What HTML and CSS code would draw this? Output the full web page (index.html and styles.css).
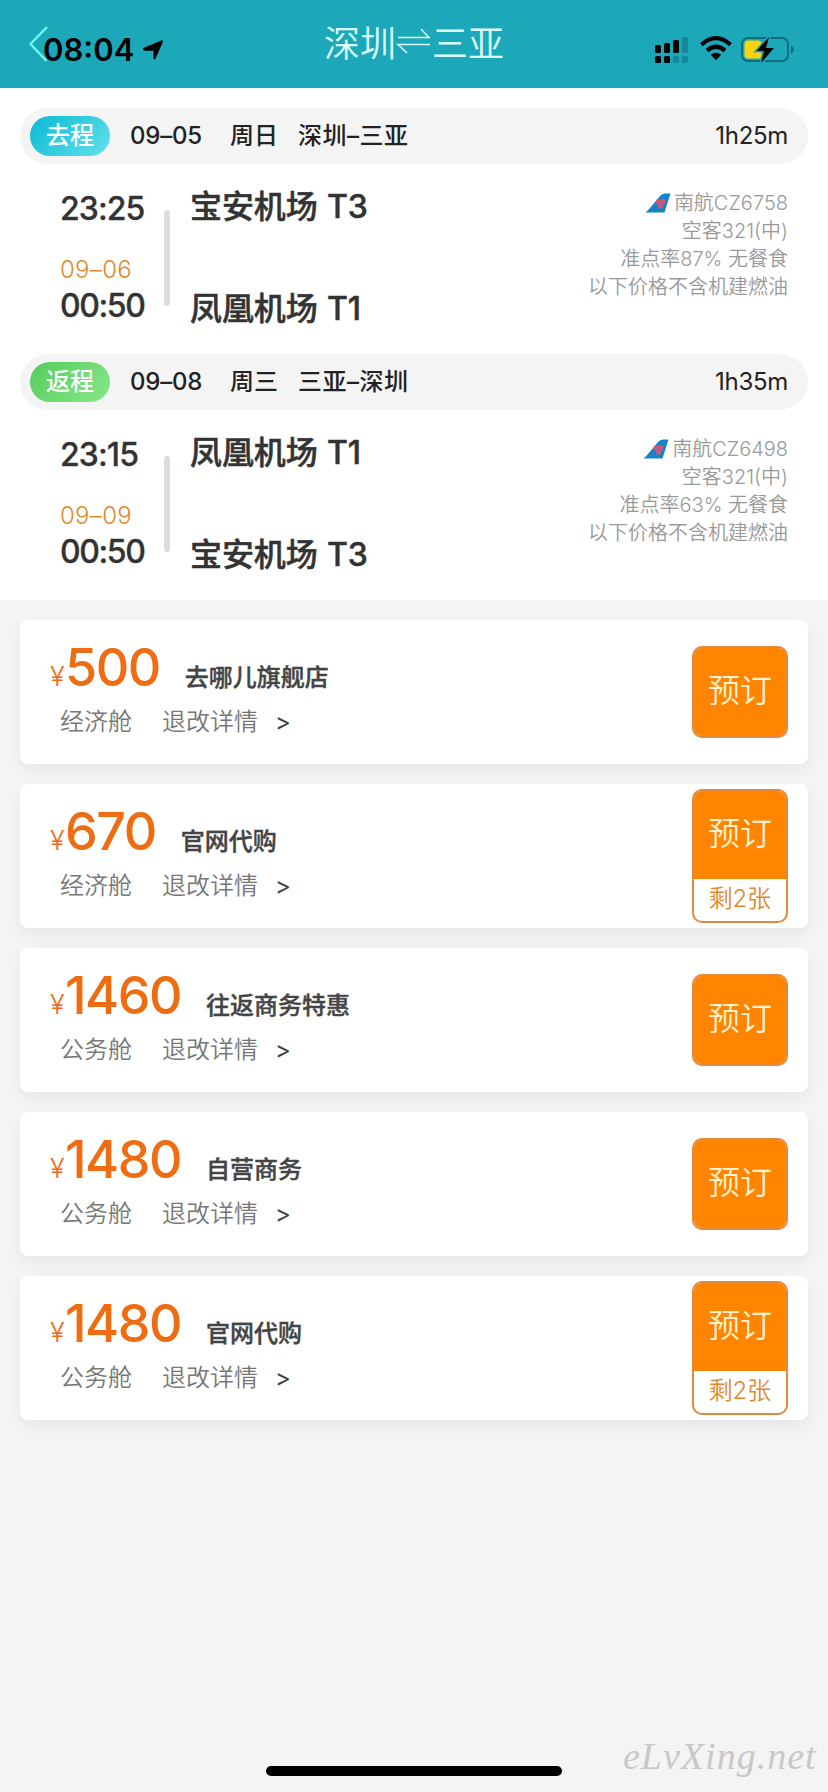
FILE: index.html
```html
<!DOCTYPE html>
<html lang="zh-CN">
<head>
<meta charset="utf-8">
<title>深圳⇌三亚</title>
<link rel="stylesheet" href="styles.css">
</head>
<body>
<svg class="defs" width="0" height="0" aria-hidden="true">
  <symbol id="tail" viewBox="0 0 26 20">
    <path d="M0 19.500C2 18.500 3 17 5 15L15 3Q17 .5 20 .5H25.500L19.500 19.500Z" fill="#1583c8"/>
    <path d="M10.500 8.500Q12 5 15.500 6.500Q19.500 5 20.500 8Q20.500 11.500 18 11.500V14.500Q15.500 17 13 14.500V11.500Q10.500 11.500 10.500 8.500Z" fill="#e0506a"/>
    <path d="M13 9L15.500 10.500L18 9M15.500 11V14" stroke="#7a6fb0" fill="none"/>
  </symbol>
</svg>
<header class="top">
  <svg class="back" viewBox="0 0 24 40"><path d="M19 3L2.500 20L18.500 37" fill="none" stroke="#6ffcf6" stroke-width="2.200"/></svg>
  <span class="clock">08:04</span>
  <svg class="nav-arrow" viewBox="0 0 24 24"><path d="M1.500 11.500Q0 10 2 9.200L19.500 1.800Q22.500 .5 21.700 3.500L14 20.500Q12.500 22.500 12 20V12.300H3.500Q2 12.300 1.500 11.500Z"/></svg>
  <h1 class="title"><span>深圳</span><svg class="swap" role="img" aria-label="⇌" viewBox="0 0 36 36"><path d="M2 15.500H33L25 7M34 22.500H2L11 31" fill="none" stroke="#dcffff" stroke-width="1.500"/></svg><span>三亚</span></h1>
  <div class="status">
    <svg class="signal" viewBox="0 0 34 27"><g><rect x="0" y="9" width="6" height="8" rx="1.500"/><rect x="9" y="7" width="6" height="10" rx="1.500"/><rect x="18" y="4" width="6" height="13" rx="1.500"/><rect x="0" y="20" width="6" height="7" rx="1.500"/><rect x="9" y="20" width="6" height="7" rx="1.500"/></g><g fill="#15899a"><rect x="27" y="1" width="6" height="16" rx="1.500"/><rect x="18" y="20" width="6" height="7" rx="1.500"/><rect x="27" y="20" width="6" height="7" rx="1.500"/></g></svg>
    <svg class="wifi" viewBox="0 0 32 25"><path d="M1.500 8.800Q16-4.500 30.500 8.800M7 14.600Q16 6.800 25 14.600" fill="none" stroke="#000" stroke-width="4.200"/><path d="M10.800 18.800Q16 14.800 21.200 18.800L16 24.300Z"/></svg>
    <svg class="battery" viewBox="0 0 54 28"><rect x="1" y="2" width="46" height="23" rx="6" fill="none" stroke="#0b6f7c" stroke-width="2"/><rect x="3.500" y="4.500" width="17" height="18" rx="3.500" fill="#fbd30d"/><path d="M50 9.500Q53 11 53 13.700Q53 16.500 50 18Z" fill="#0b6f7c"/><path d="M28 1L15.500 15H23L20 27L33 12H25Z" stroke="#1da8b9" stroke-width="3"/><path d="M28 1L15.500 15H23L20 27L33 12H25Z"/></svg>
  </div>
</header>

<main>
<section class="legs">
  <article class="leg">
    <div class="leg-bar"><span class="tag tag-go">去程</span><span class="date">09–05</span><span class="week">周日</span><span class="route">深圳–三亚</span><span class="length">1h25m</span></div>
    <div class="leg-body">
      <div class="times"><span class="time">23:25</span><span class="next-day">09–06</span><span class="time">00:50</span></div>
      <div class="rail"></div>
      <div class="ports"><span>宝安机场 T3</span><span>凤凰机场 T1</span></div>
      <div class="info"><span class="flight"><svg class="tail"><use href="#tail"/></svg>南航CZ6758</span><span>空客321(中)</span><span>准点率87% 无餐食</span><span>以下价格不含机建燃油</span></div>
    </div>
  </article>
  <article class="leg">
    <div class="leg-bar"><span class="tag tag-back">返程</span><span class="date">09–08</span><span class="week">周三</span><span class="route">三亚–深圳</span><span class="length">1h35m</span></div>
    <div class="leg-body">
      <div class="times"><span class="time">23:15</span><span class="next-day">09–09</span><span class="time">00:50</span></div>
      <div class="rail"></div>
      <div class="ports"><span>凤凰机场 T1</span><span>宝安机场 T3</span></div>
      <div class="info"><span class="flight"><svg class="tail"><use href="#tail"/></svg>南航CZ6498</span><span>空客321(中)</span><span>准点率63% 无餐食</span><span>以下价格不含机建燃油</span></div>
    </div>
  </article>
</section>

<section class="fares">
  <article class="fare">
    <div class="fare-main"><div class="offer"><span class="yen">¥</span><span class="price">500</span><span class="seller">去哪儿旗舰店</span></div>
    <div class="terms"><span class="cabin">经济舱</span><span class="rules">退改详情</span><span class="more">&gt;</span></div></div>
    <div class="book"><span class="book-label">预订</span></div>
  </article>
  <article class="fare">
    <div class="fare-main"><div class="offer"><span class="yen">¥</span><span class="price">670</span><span class="seller">官网代购</span></div>
    <div class="terms"><span class="cabin">经济舱</span><span class="rules">退改详情</span><span class="more">&gt;</span></div></div>
    <div class="book"><span class="book-label">预订</span><span class="left">剩2张</span></div>
  </article>
  <article class="fare">
    <div class="fare-main"><div class="offer"><span class="yen">¥</span><span class="price">1460</span><span class="seller">往返商务特惠</span></div>
    <div class="terms"><span class="cabin">公务舱</span><span class="rules">退改详情</span><span class="more">&gt;</span></div></div>
    <div class="book"><span class="book-label">预订</span></div>
  </article>
  <article class="fare">
    <div class="fare-main"><div class="offer"><span class="yen">¥</span><span class="price">1480</span><span class="seller">自营商务</span></div>
    <div class="terms"><span class="cabin">公务舱</span><span class="rules">退改详情</span><span class="more">&gt;</span></div></div>
    <div class="book"><span class="book-label">预订</span></div>
  </article>
  <article class="fare">
    <div class="fare-main"><div class="offer"><span class="yen">¥</span><span class="price">1480</span><span class="seller">官网代购</span></div>
    <div class="terms"><span class="cabin">公务舱</span><span class="rules">退改详情</span><span class="more">&gt;</span></div></div>
    <div class="book"><span class="book-label">预订</span><span class="left">剩2张</span></div>
  </article>
</section>
</main>
<div class="home-indicator"></div>
<div class="watermark">eLvXing.net</div>
</body>
</html>
```
FILE: styles.css
```css
* { box-sizing: border-box; }
body {
  margin: 0;
  width: 828px;
  height: 1792px;
  position: relative;
  overflow: hidden;
  background: #f4f4f4;
  color: #333;
  font-family: Inter, "Noto Sans CJK SC", sans-serif;
  font-size: 24px;
}
svg { display: block; flex: none; }
.defs { position: absolute; }

.top {
  height: 88px;
  background: #1da8b9;
  display: grid;
  grid-template-columns: 1fr auto 1fr;
  position: relative;
}
.back { position: absolute; left: 28px; top: 24px; width: 24px; height: 40px; }
.clock {
  position: absolute;
  left: 43px;
  top: 30px;
  line-height: 40px;
  font-size: 31px;
  font-weight: 600;
  color: #000;
}
.nav-arrow { position: absolute; left: 142px; top: 39px; width: 23px; height: 23px; }
.title {
  grid-column: 2;
  margin: 0;
  height: 88px;
  display: flex;
  align-items: center;
  font-size: 36px;
  font-weight: 350;
  line-height: 88px;
  color: #dcffff;
}
.swap { width: 36px; height: 36px; margin-top: -8px; }
.status {
  grid-column: 3;
  justify-self: end;
  display: flex;
  padding: 36px 33px 0 0;
}
.signal { width: 34px; height: 27px; margin-right: 11px; }
.wifi { width: 32px; height: 25px; margin-right: 9px; }
.battery { width: 54px; height: 28px; }

.legs { height: 512px; padding: 20px 20px 0; background: #fff; }
.leg { height: 246px; }
.leg-bar {
  height: 56px;
  border-radius: 28px;
  padding: 0 20px 0 10px;
  background: #f4f4f4;
  display: flex;
  align-items: center;
  color: #222;
  font-weight: 500;
}
.tag {
  width: 80px;
  height: 40px;
  border-radius: 20px;
  line-height: 40px;
  text-align: center;
  color: #fff;
  margin-right: 20px;
}
.tag-go { background: linear-gradient(135deg, #08bad3, #66e0ec); }
.tag-back { background: linear-gradient(135deg, #55cc5c, #88e88b); }
.date { width: 100px; line-height: 54px; letter-spacing: -.2px; }
.week { width: 68px; line-height: 54px; padding-bottom: 1px; }
.route { line-height: 54px; padding-bottom: 1px; letter-spacing: .5px; }
.length { margin-left: auto; line-height: 54px; font-weight: 400; letter-spacing: -.3px; }
.date, .length { padding-bottom: 1px; }

.leg-body { display: flex; padding-left: 40px; }
.times { width: 104px; display: flex; flex-direction: column; padding-top: 25px; }
.time { font-size: 32px; line-height: 40px; font-weight: 500; letter-spacing: -.9px; -webkit-text-stroke: .3px; }
.next-day { margin-top: 27px; line-height: 28px; color: #de8a2c; letter-spacing: .3px; font-weight: 300; }
.next-day + .time { margin-top: 2px; letter-spacing: -1.400px; }
.rail { width: 6px; height: 96px; margin-top: 46px; border-radius: 3px; background: #ddd; }
.ports {
  margin-left: 20px;
  padding-top: 23px;
  display: flex;
  flex-direction: column;
  gap: 62px;
  font-size: 32px;
  line-height: 40px;
  font-weight: 500;
  letter-spacing: -.1px;
  word-spacing: 1px;
  -webkit-text-stroke: .5px;
}
.info {
  margin-left: auto;
  padding: 25px 20px 0 0;
  display: flex;
  flex-direction: column;
  align-items: flex-end;
  font-size: 20px;
  line-height: 28px;
  font-weight: 350;
  color: #999;
}
.flight { display: flex; }
.tail { width: 26px; height: 20px; margin: 4px 3px 0 0; }

.fares { padding: 20px; display: flex; flex-direction: column; gap: 20px; }
.fare {
  height: 144px;
  border-radius: 8px;
  background: #fff;
  box-shadow: 0 6px 16px rgba(0, 0, 0, .06);
  padding: 0 20px 0 30px;
  display: flex;
  align-items: center;
  justify-content: space-between;
}
.fare-main { height: 144px; padding-top: 16px; }
.offer { display: flex; align-items: baseline; height: 68px; line-height: 64px; color: #ee6c12; }
.yen { width: 15px; font-size: 27px; font-weight: 350; }
.price { font-size: 52px; font-weight: 500; letter-spacing: -1.500px; }
.seller { margin-left: 25px; line-height: 30px; color: #444; font-weight: 500; -webkit-text-stroke: .4px; }
.terms { display: flex; padding-left: 10px; line-height: 36px; font-weight: 350; color: #777; }
.cabin { width: 102px; }
.rules { width: 113px; }
.more { color: #444; font-weight: 400; }
.book {
  width: 96px;
  border: 2px solid #e2883f;
  border-radius: 10px;
  overflow: hidden;
  text-align: center;
  background: #fff;
}
.book-label {
  display: block;
  height: 88px;
  line-height: 86px;
  background: #ff8400;
  color: #fff3cf;
  font-size: 32px;
  font-weight: 350;
}
.left { display: block; height: 42px; line-height: 40px; color: #de8a2c; font-weight: 350; }

.home-indicator {
  position: absolute;
  left: 266px;
  top: 1766px;
  width: 296px;
  height: 10px;
  border-radius: 5px;
  background: #000;
}
.watermark {
  position: absolute;
  left: 623px;
  top: 1734px;
  font: italic 38px/44px "Liberation Serif", serif;
  letter-spacing: 1px;
  color: #c8c8c8;
}
```
